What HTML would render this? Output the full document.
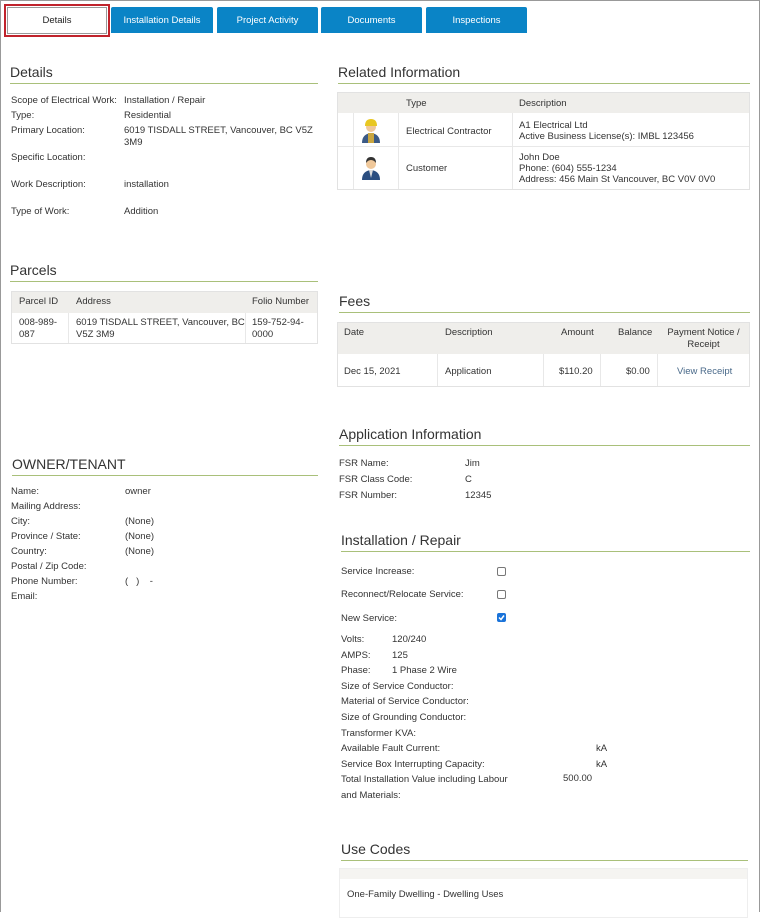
<!DOCTYPE html>
<html><head><meta charset="utf-8"><style>
*{margin:0;padding:0;box-sizing:border-box}
body{width:760px;height:912px;background:#fff;font-family:"Liberation Sans",Tahoma,sans-serif;font-size:9.5px;color:#333;position:relative;overflow:hidden}
#frame{position:absolute;left:0;top:0;width:760px;height:912px;border:1px solid #999;border-bottom:none}
.a{position:absolute;white-space:nowrap}
.tab{position:absolute;top:7px;height:26px;background:#0a84c6;color:#fff;font-size:9.5px;display:flex;align-items:center;justify-content:center;border-radius:2px 2px 0 0}
.h{position:absolute;font-size:14px;color:#333;border-bottom:1px solid #a9c07a;padding-bottom:2px;height:20px}
.tbl{position:absolute;border:1px solid #e2e2e2}
.th{position:absolute;background:#efeeeb}
.vl{position:absolute;width:1px;background:#e8e8e8}
.hl{position:absolute;height:1px;background:#e8e8e8}
.cb{position:absolute;width:9px;height:9px;border:1px solid #777;border-radius:2px;background:#fff}
</style></head><body>
<div id="frame"></div>
<div class="a" style="left:4px;top:4px;width:106px;height:33px;border:2px solid #c0232c"></div>
<div class="a" style="left:7px;top:7px;width:100px;height:27px;border:1px solid #999;display:flex;align-items:center;justify-content:center;color:#222">Details</div>
<div class="tab" style="left:111px;width:102px">Installation Details</div>
<div class="tab" style="left:217px;width:101px">Project Activity</div>
<div class="tab" style="left:321px;width:101px">Documents</div>
<div class="tab" style="left:426px;width:101px">Inspections</div>

<div class="h" style="left:10px;top:64px;width:308px">Details</div>
<div class="a" style="left:11px;top:95px">Scope of Electrical Work:</div><div class="a" style="left:124px;top:95px">Installation / Repair</div>
<div class="a" style="left:11px;top:110px">Type:</div><div class="a" style="left:124px;top:110px">Residential</div>
<div class="a" style="left:11px;top:125px">Primary Location:</div><div class="a" style="left:124px;top:125px;line-height:12px">6019 TISDALL STREET, Vancouver, BC V5Z<br>3M9</div>
<div class="a" style="left:11px;top:152px">Specific Location:</div>
<div class="a" style="left:11px;top:179px">Work Description:</div><div class="a" style="left:124px;top:179px">installation</div>
<div class="a" style="left:11px;top:206px">Type of Work:</div><div class="a" style="left:124px;top:206px">Addition</div>

<div class="h" style="left:10px;top:262px;width:308px">Parcels</div>
<div class="tbl" style="left:11px;top:291px;width:307px;height:53px"></div>
<div class="th" style="left:12px;top:292px;width:305px;height:21px"></div>
<div class="vl" style="left:68px;top:313px;height:30px"></div><div class="vl" style="left:245px;top:313px;height:30px"></div>
<div class="a" style="left:19px;top:296px">Parcel ID</div><div class="a" style="left:76px;top:296px">Address</div><div class="a" style="left:252px;top:296px">Folio Number</div>
<div class="a" style="left:19px;top:317px;line-height:12px">008-989-<br>087</div>
<div class="a" style="left:76px;top:317px;line-height:12px">6019 TISDALL STREET, Vancouver, BC<br>V5Z 3M9</div>
<div class="a" style="left:252px;top:317px;line-height:12px">159-752-94-<br>0000</div>

<div class="h" style="left:12px;top:456px;width:306px">OWNER/TENANT</div>
<div class="a" style="left:11px;top:484px;line-height:15px">Name:<br>Mailing Address:<br>City:<br>Province / State:<br>Country:<br>Postal / Zip Code:<br>Phone Number:<br>Email:</div>
<div class="a" style="left:125px;top:484px;line-height:15px">owner<br>&nbsp;<br>(None)<br>(None)<br>(None)<br>&nbsp;<br>(&nbsp;&nbsp;&nbsp;)&nbsp;&nbsp;&nbsp;&nbsp;-</div>

<div class="h" style="left:338px;top:64px;width:412px">Related Information</div>
<div class="tbl" style="left:337px;top:92px;width:413px;height:98px"></div>
<div class="th" style="left:338px;top:93px;width:411px;height:20px"></div>
<div class="hl" style="left:338px;top:146px;width:411px"></div>
<div class="vl" style="left:353px;top:113px;height:76px"></div><div class="vl" style="left:398px;top:113px;height:76px"></div><div class="vl" style="left:512px;top:113px;height:76px"></div>
<div class="a" style="left:406px;top:98px">Type</div><div class="a" style="left:519px;top:98px">Description</div>
<svg class="a" style="left:360px;top:117px" width="22" height="26" viewBox="0 0 22 26"><path d="M2 26 Q2 17 11 16 Q20 17 20 26Z" fill="#3b5a86"/><rect x="8" y="16" width="6" height="10" fill="#c9a640"/><circle cx="11" cy="10" r="5" fill="#f0c89a"/><path d="M5 9 Q5 2 11 2 Q17 2 17 9Z" fill="#e8c722"/></svg>
<svg class="a" style="left:360px;top:154px" width="22" height="26" viewBox="0 0 22 26"><path d="M2 26 Q2 17 11 16 Q20 17 20 26Z" fill="#2b4e80"/><path d="M9 16 L11 24 L13 16Z" fill="#ddd"/><circle cx="11" cy="10" r="5" fill="#f0c89a"/><path d="M6 9 Q6 3 11 3 Q16 3 16 9 Q14 6 11 6 Q8 6 6 9Z" fill="#333"/></svg>
<div class="a" style="left:406px;top:126px">Electrical Contractor</div>
<div class="a" style="left:519px;top:120px;line-height:11px">A1 Electrical Ltd<br>Active Business License(s): IMBL 123456</div>
<div class="a" style="left:406px;top:163px">Customer</div>
<div class="a" style="left:519px;top:152px;line-height:11px">John Doe<br>Phone: (604) 555-1234<br>Address: 456 Main St Vancouver, BC V0V 0V0</div>

<div class="h" style="left:339px;top:293px;width:411px">Fees</div>
<div class="tbl" style="left:337px;top:322px;width:413px;height:65px"></div>
<div class="th" style="left:338px;top:323px;width:411px;height:31px"></div>
<div class="vl" style="left:437px;top:354px;height:32px"></div><div class="vl" style="left:543px;top:354px;height:32px"></div><div class="vl" style="left:600px;top:354px;height:32px"></div><div class="vl" style="left:657px;top:354px;height:32px"></div>
<div class="a" style="left:344px;top:327px">Date</div><div class="a" style="left:445px;top:327px">Description</div>
<div class="a" style="left:561px;top:327px">Amount</div><div class="a" style="left:618px;top:327px">Balance</div>
<div class="a" style="left:662px;top:327px;width:83px;text-align:center;line-height:12px">Payment Notice /<br>Receipt</div>
<div class="a" style="left:344px;top:366px">Dec 15, 2021</div><div class="a" style="left:445px;top:366px">Application</div>
<div class="a" style="left:559px;top:366px">$110.20</div><div class="a" style="left:626px;top:366px">$0.00</div>
<div class="a" style="left:677px;top:366px;color:#4a6a8a">View Receipt</div>

<div class="h" style="left:339px;top:426px;width:411px">Application Information</div>
<div class="a" style="left:339px;top:456px;line-height:16px">FSR Name:<br>FSR Class Code:<br>FSR Number:</div>
<div class="a" style="left:465px;top:456px;line-height:16px">Jim<br>C<br>12345</div>

<div class="h" style="left:341px;top:532px;width:409px">Installation / Repair</div>
<div class="a" style="left:341px;top:566px">Service Increase:</div><div class="cb" style="left:497px;top:567px"></div>
<div class="a" style="left:341px;top:589px">Reconnect/Relocate Service:</div><div class="cb" style="left:497px;top:590px"></div>
<div class="a" style="left:341px;top:613px">New Service:</div>
<div class="a" style="left:497px;top:613px;width:9px;height:9px;background:#1a73d9;border-radius:2px"><svg width="9" height="9" viewBox="0 0 9 9" style="display:block"><path d="M2 4.5 L4 6.5 L7 2.5" stroke="#fff" stroke-width="1.5" fill="none"/></svg></div>
<div class="a" style="left:341px;top:632px;line-height:15.6px">Volts:<br>AMPS:<br>Phase:<br>Size of Service Conductor:<br>Material of Service Conductor:<br>Size of Grounding Conductor:<br>Transformer KVA:<br>Available Fault Current:<br>Service Box Interrupting Capacity:<br>Total Installation Value including Labour<br>and Materials:</div>
<div class="a" style="left:392px;top:632px;line-height:15.6px">120/240<br>125<br>1 Phase 2 Wire</div>
<div class="a" style="left:596px;top:741px;line-height:15.6px">kA<br>kA</div>
<div class="a" style="left:563px;top:773px">500.00</div>
<div class="a" style="left:341px;top:788px">&nbsp;</div>

<div class="h" style="left:341px;top:841px;width:407px">Use Codes</div>
<div class="tbl" style="left:339px;top:868px;width:409px;height:50px;border-color:#eee"></div>
<div class="th" style="left:340px;top:869px;width:407px;height:10px;background:#f5f4f1"></div>
<div class="a" style="left:347px;top:889px">One-Family Dwelling - Dwelling Uses</div>
</body></html>
